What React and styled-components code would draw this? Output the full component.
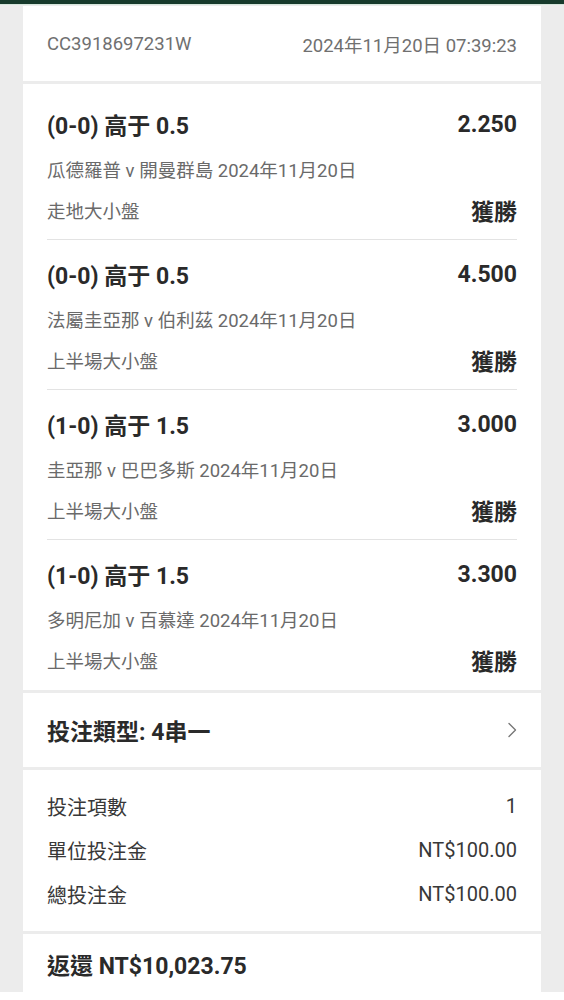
import React from "react";
import styled, { createGlobalStyle } from "styled-components";

const GlobalStyle = createGlobalStyle`
  html, body {
    margin: 0;
    padding: 0;
    background: #ececec;
  }
  body {
    font-family: Roboto, "Noto Sans CJK TC", sans-serif;
    color: #2a2a2a;
  }
`;

const Page = styled.div`
  width: 564px;
  height: 1000px;
  display: flex;
  flex-direction: column;
  background: #ececec;
  overflow: hidden;
`;

const TopBar = styled.div`
  height: 4px;
  background: #173a2c;
  border-bottom: 1px solid #d6e6dc;
  flex-shrink: 0;
`;

const Column = styled.div`
  flex: 1;
  display: flex;
  flex-direction: column;
  gap: 3px;
  padding: 1px 23px 0;
  overflow: hidden;
`;

const Card = styled.div`
  background: #fff;
  padding: ${(p) => p.$pad || "0 24px"};
  flex-shrink: 0;
`;

const HeaderRow = styled.div`
  height: 75px;
  display: flex;
  align-items: center;
  justify-content: space-between;
  font-size: 18.5px;
  color: #707070;
`;

const Selection = styled.div`
  display: flex;
  flex-direction: column;
  padding: 20px 0 14px;
  border-bottom: 1px solid #e3e3e3;

  &:last-child {
    border-bottom: none;
  }
`;

const Row = styled.div`
  display: flex;
  align-items: center;
  justify-content: space-between;
  height: ${(p) => p.$h || 28}px;
  margin-top: ${(p) => p.$mt || 0}px;
  white-space: nowrap;
`;

const Title = styled.span`
  font-size: 23px;
  font-weight: 700;
  color: #2a2a2a;
`;

const Sub = styled.span`
  font-size: 18.5px;
  color: #6a6a6a;
`;

const BetTypeRow = styled.div`
  height: 74px;
  display: flex;
  align-items: center;
  justify-content: space-between;
`;

const SummaryRow = styled.div`
  height: 44px;
  display: flex;
  align-items: center;
  justify-content: space-between;
  font-size: 20px;
  color: #383838;
`;

const Returns = styled.div`
  height: 58px;
  padding-top: 13px;
  box-sizing: border-box;
`;

const Footer = styled.div`
  height: 8px;
  background: #fff;
  flex-shrink: 0;
`;

const selections = [
  { title: "(0-0) 高于 0.5", odds: "2.250", match: "瓜德羅普 v 開曼群島 2024年11月20日", market: "走地大小盤" },
  { title: "(0-0) 高于 0.5", odds: "4.500", match: "法屬圭亞那 v 伯利茲 2024年11月20日", market: "上半場大小盤" },
  { title: "(1-0) 高于 1.5", odds: "3.000", match: "圭亞那 v 巴巴多斯 2024年11月20日", market: "上半場大小盤" },
  { title: "(1-0) 高于 1.5", odds: "3.300", match: "多明尼加 v 百慕達 2024年11月20日", market: "上半場大小盤" },
];

const summary = [
  ["投注項數", "1"],
  ["單位投注金", "NT$100.00"],
  ["總投注金", "NT$100.00"],
];

function Chevron() {
  return (
    <svg width="10" height="16" viewBox="0 0 10 16" fill="none">
      <path d="M2 1.5 L8.5 8 L2 14.5" stroke="#777" strokeWidth="1.4" strokeLinecap="round" strokeLinejoin="round" />
    </svg>
  );
}

export default function App() {
  return (
    <Page>
      <GlobalStyle />
      <TopBar />
      <Column>
        <Card>
          <HeaderRow>
            <span>CC3918697231W</span>
            <span>2024年11月20日 07:39:23</span>
          </HeaderRow>
        </Card>

        <Card $pad="6px 24px 1px">
          {selections.map((s, i) => (
            <Selection key={i}>
              <Row $h={28}>
                <Title>{s.title}</Title>
                <Title>{s.odds}</Title>
              </Row>
              <Row $h={24} $mt={19}>
                <Sub>{s.match}</Sub>
              </Row>
              <Row $h={30} $mt={14}>
                <Sub>{s.market}</Sub>
                <Title>獲勝</Title>
              </Row>
            </Selection>
          ))}
        </Card>

        <Card>
          <BetTypeRow>
            <Title>投注類型: 4串一</Title>
            <Chevron />
          </BetTypeRow>
        </Card>

        <Card $pad="14px 24px 15px">
          {summary.map(([label, value]) => (
            <SummaryRow key={label}>
              <span>{label}</span>
              <span>{value}</span>
            </SummaryRow>
          ))}
        </Card>

        <Card>
          <Returns>
            <Title>返還 NT$10,023.75</Title>
          </Returns>
        </Card>
      </Column>
      <Footer />
    </Page>
  );
}
